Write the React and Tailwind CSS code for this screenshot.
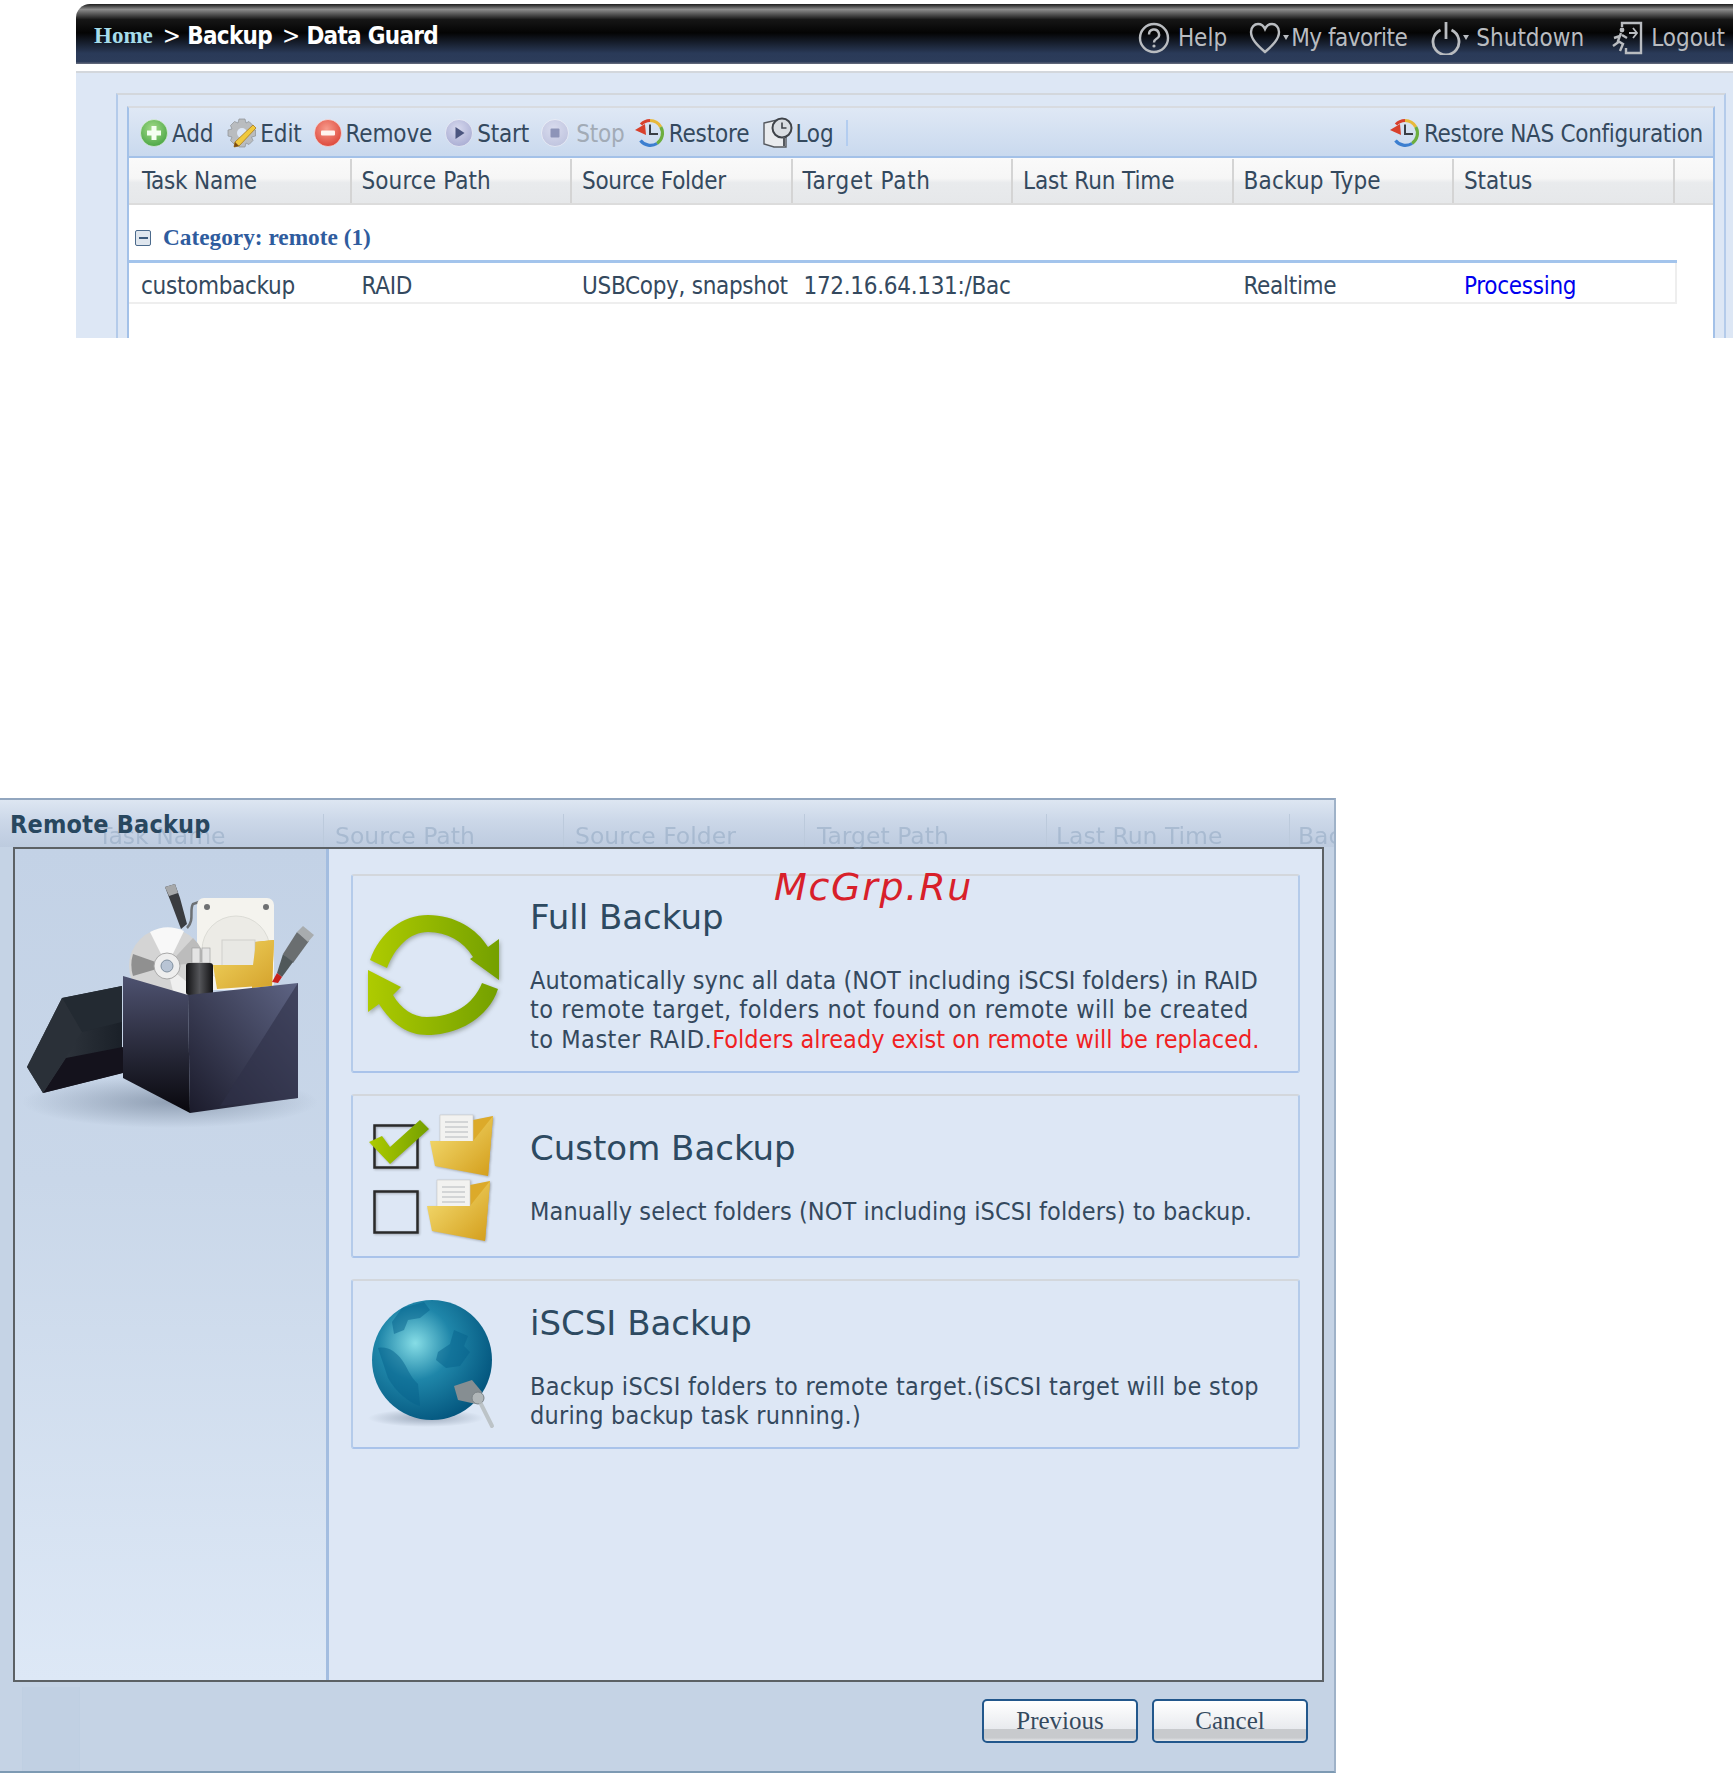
const COLS = [
  { label: 'Task Name', track: 'tracking-[-0.2px]' },
  { label: 'Source Path', track: 'tracking-[0.1px]' },
  { label: 'Source Folder', track: 'tracking-[-0.3px]' },
  { label: 'Target Path', track: 'tracking-[0.7px]' },
  { label: 'Last Run Time', track: 'tracking-[-0.1px]' },
  { label: 'Backup Type', track: 'tracking-[0.2px]' },
  { label: 'Status', track: 'tracking-[-0.1px]' },
]

function Round({ id, from, to, children }) {
  return (
    <svg width="28" height="28" viewBox="0 0 28 28" className="shrink-0">
      <defs>
        <radialGradient id={id} cx="0.45" cy="0.35" r="0.75">
          <stop offset="0" stopColor={from} />
          <stop offset="1" stopColor={to} />
        </radialGradient>
      </defs>
      <circle cx="14" cy="14" r="13.500" fill={`url(#${id})`} stroke="#ffffff" strokeOpacity="0.5" />
      {children}
    </svg>
  )
}

function AddIcon() {
  return (
    <Round id="gAdd" from="#a5dc8a" to="#3f9f3c">
      <path d="M11.500 7h5v4.500H21v5h-4.500V21h-5v-4.500H7v-5h4.500z" fill="#f4fff0" />
    </Round>
  )
}

function RemoveIcon() {
  return (
    <Round id="gRem" from="#f79b8c" to="#d93c30">
      <rect x="7" y="11.500" width="14" height="5" rx="1" fill="#fff4f0" />
    </Round>
  )
}

function StartIcon() {
  return (
    <Round id="gStart" from="#d7d9ee" to="#a4a8d0">
      <path d="M10.500 8l9 6-9 6z" fill="#4b557f" />
    </Round>
  )
}

function StopIcon() {
  return (
    <Round id="gStop" from="#d9dcee" to="#bcc1dd">
      <rect x="9.500" y="9.500" width="9" height="9" rx="1" fill="#8d94b8" />
    </Round>
  )
}

function EditIcon() {
  return (
    <svg width="32" height="32" viewBox="0 0 32 32" className="shrink-0">
      <g fill="#b9bcbf" stroke="#8d9093" strokeWidth="0.7">
        <path d="M13 2h6l1 4 3-1.500 4 4L25.500 12l4 1v6l-4 1 1.500 3.500-4 4L20 26l-1 4h-6l-1-4-3.500 1.500-4-4L6 20l-4-1v-6l4-1-1.500-3.500 4-4L12 6z" />
      </g>
      <circle cx="16" cy="16" r="5" fill="#dde7f5" />
      <path d="M27 8l3 3-17 18-5 1 1-5z" fill="#f0c93e" stroke="#a87a1a" strokeWidth="0.8" />
      <path d="M9 25l-1 5 5-1z" fill="#7a4a14" />
    </svg>
  )
}

function RestoreIcon() {
  return (
    <svg width="30" height="30" viewBox="0 0 30 30" className="shrink-0">
      <path d="M15 2.500a12.500 12.500 0 0 1 10.800 6.500" fill="none" stroke="#e8b93a" strokeWidth="3.200" />
      <path d="M25.800 9A12.500 12.500 0 0 1 22 25.500" fill="none" stroke="#6cae3f" strokeWidth="3.200" />
      <path d="M22 25.500A12.500 12.500 0 0 1 5.500 22.500" fill="none" stroke="#3c7fd0" strokeWidth="3.200" />
      <path d="M15 2.500A12.500 12.500 0 0 0 6 6.500" fill="none" stroke="#d8402c" strokeWidth="3.200" />
      <path d="M0 12l10-6 1 11z" fill="#d8402c" />
      <path d="M15 6.500v9.500h8" fill="none" stroke="#3a3f46" strokeWidth="2" />
    </svg>
  )
}

function LogIcon() {
  return (
    <svg width="30" height="32" viewBox="0 0 30 32" className="shrink-0">
      <path d="M1 6l13-3 9 4v23l-12 0-10-3z" fill="#e9ebee" stroke="#55595f" strokeWidth="1.400" />
      <circle cx="19" cy="11" r="9.500" fill="#d9dde2" stroke="#3f4349" strokeWidth="2" />
      <path d="M19 5.500v5.500h4.500" fill="none" stroke="#3f4349" strokeWidth="1.600" />
      <path d="M21 20v9" stroke="#55595f" strokeWidth="2" />
    </svg>
  )
}

function ToolItem({ icon, label, className = '', muted = false }) {
  return (
    <div className={`flex items-center gap-[4px] ${className}`}>
      {icon}
      <span className={`pt-[2px] ${muted ? 'text-[#a2abb6]' : 'text-[#34495e]'}`}>{label}</span>
    </div>
  )
}

function HeadIcons({ kind }) {
  const s = { fill: 'none', stroke: '#b9bcc0', strokeWidth: 2.400 }
  if (kind === 'help') {
    return (
      <svg width="32" height="32" viewBox="0 0 32 32" className="shrink-0">
        <circle cx="16" cy="16" r="14" {...s} />
        <path d="M11 12.500a5 5 0 1 1 7.500 4.300c-1.700 1-2.500 1.700-2.500 3.700" {...s} />
        <circle cx="16" cy="24" r="1.600" fill="#b9bcc0" />
      </svg>
    )
  }
  if (kind === 'heart') {
    return (
      <svg width="32" height="32" viewBox="0 0 32 32" className="shrink-0">
        <path d="M16 30C8 23 2 17 2 10c0-5 3.500-8 7-8 3 0 5.500 1.500 7 5 1.500-3.500 4-5 7-5 3.500 0 7 3 7 8 0 7-6 13-14 20z" {...s} />
      </svg>
    )
  }
  if (kind === 'power') {
    return (
      <svg width="30" height="34" viewBox="0 0 30 34" className="shrink-0">
        <path d="M9.500 9a13 13 0 1 0 11 0" {...s} strokeWidth="2.800" />
        <path d="M15 1v17" {...s} strokeWidth="2.800" />
      </svg>
    )
  }
  return (
    <svg width="32" height="34" viewBox="0 0 32 34" className="shrink-0">
      <path d="M11 6V2h19v30H15v-5" {...s} />
      <circle cx="11" cy="9" r="2.400" fill="#b9bcc0" />
      <path d="M10 12l-3 8 5 3-3 7M9 15l-6 2M9 20l-7 5M11 14l5 3" {...s} />
      <path d="M18 12h8M22 7l4 5-4 5" {...s} strokeWidth="1.800" />
    </svg>
  )
}

function Caret() {
  return <span className="mx-[2px] h-0 w-0 border-x-[3px] border-t-[5px] border-x-transparent border-t-[#b9bcc0]" />
}

function Header() {
  return (
    <div className="flex h-[60px] items-center justify-between rounded-tl-[14px] bg-[linear-gradient(180deg,#1c1c1c_0%,#8b8b8b_9%,#161616_26%,#040404_48%,#2a3a58_82%,#2c3c5a_96%,#6a7080_100%)] pl-[18px] pr-[8px] pt-[2px]">
      <div className="flex items-center pt-[2px] text-[24px] font-bold tracking-[-0.7px] text-white [font-family:'DejaVu_Sans_Condensed','DejaVu_Sans',sans-serif]">
        <span className="text-[23px] tracking-normal text-[#a6dcea] [font-family:'Liberation_Serif',serif]">Home</span>
        <span className="ml-[10px] font-normal">&gt;</span>
        <span className="ml-[7px]">Backup</span>
        <span className="ml-[10px] font-normal">&gt;</span>
        <span className="ml-[7px]">Data Guard</span>
      </div>
      <div className="flex items-center pt-[5px] text-[24px] text-[#b9bcc0] [font-family:'DejaVu_Sans_Condensed','DejaVu_Sans',sans-serif]">
        <HeadIcons kind="help" />
        <span className="ml-[8px]">Help</span>
        <span className="ml-[22px]"><HeadIcons kind="heart" /></span>
        <Caret />
        <span className="tracking-[-0.5px]">My favorite</span>
        <span className="ml-[24px]"><HeadIcons kind="power" /></span>
        <Caret />
        <span className="ml-[5px]">Shutdown</span>
        <span className="ml-[27px]"><HeadIcons kind="logout" /></span>
        <span className="ml-[8px]">Logout</span>
      </div>
    </div>
  )
}

function Toolbar() {
  return (
    <div className="flex h-[50px] items-center justify-between border-b-[2px] border-[#a3c1e8] bg-[linear-gradient(180deg,#dfe8f5,#c9d9ee)] pl-[11px] pr-[10px] pt-[1px]">
      <div className="flex items-center tracking-[-0.15px]">
        <ToolItem icon={<AddIcon />} label="Add" />
        <ToolItem icon={<EditIcon />} label="Edit" className="ml-[13px] !gap-[2px]" />
        <ToolItem icon={<RemoveIcon />} label="Remove" className="ml-[12px]" />
        <ToolItem icon={<StartIcon />} label="Start" className="ml-[13px]" />
        <ToolItem icon={<StopIcon />} label="Stop" className="ml-[12px] !gap-[7px]" muted />
        <ToolItem icon={<RestoreIcon />} label="Restore" className="ml-[10px]" />
        <ToolItem icon={<LogIcon />} label="Log" className="ml-[14px] !gap-[2px]" />
        <div className="ml-[13px] h-[26px] w-[2px] bg-[#b3cdf0]" />
      </div>
      <ToolItem icon={<RestoreIcon />} label="Restore NAS Configuration" />
    </div>
  )
}

function DataGrid() {
  return (
    <div className="text-[24px] tracking-[-0.3px] [font-family:'DejaVu_Sans_Condensed','DejaVu_Sans',sans-serif]">
      <Toolbar />
      <div className="grid h-[47px] grid-cols-[222.5px_repeat(6,220.5px)_1fr] border-b-[2px] border-[#dcdcdc] bg-[linear-gradient(180deg,#fafafa_0%,#f6f6f6_45%,#e9ebed_55%,#e6e8ea_100%)] pt-[1px] text-[#34495e]">
        {COLS.map((c, i) => (
          <div key={c.label} className={`flex items-center border-r-[2px] border-[#d4d4d4] ${c.track} ${i === 0 ? 'pl-[13px]' : 'pl-[10px]'}`}>{c.label}</div>
        ))}
        <div />
      </div>
      <div className="bg-white">
        <div className="h-[58px] w-[1548px] border-b-[3px] border-[#a3c4ec]">
          <div className="flex h-full items-center pl-[6px] pt-[10px]">
            <span className="flex h-[16px] w-[16px] items-center justify-center rounded-[2px] border border-[#4b6a8c] bg-[#dfe6ee]">
              <span className="h-[2px] w-[9px] bg-[#3c5a7c]" />
            </span>
            <span className="ml-[12px] text-[23.300px] font-bold tracking-normal text-[#2f5c9e] [font-family:'Liberation_Serif',serif]">Category: remote (1)</span>
          </div>
        </div>
        <div className="grid h-[41px] w-[1548px] grid-cols-[222.5px_repeat(6,220.5px)] whitespace-nowrap border-b-[2px] border-r-[2px] border-[#eeeeee] pt-[5px] text-[#34495e]">
          <div className="flex items-center pl-[12px]">custombackup</div>
          <div className="flex items-center pl-[10px]">RAID</div>
          <div className="flex items-center pl-[10px]">USBCopy, snapshot</div>
          <div className="flex items-center overflow-hidden pl-[11px]">172.16.64.131:/Bac</div>
          <div />
          <div className="flex items-center pl-[10px]">Realtime</div>
          <div className="flex items-center pl-[10px] text-[#0000ee]">Processing</div>
        </div>
      </div>
    </div>
  )
}

function BoxArt() {
  return (
    <svg width="300" height="260" viewBox="0 0 300 260" className="ml-[5px] mt-[21px]">
      <defs>
        <linearGradient id="boxL" x1="0" y1="0" x2="0" y2="1">
          <stop offset="0" stopColor="#4e5270" />
          <stop offset="1" stopColor="#08070c" />
        </linearGradient>
        <linearGradient id="boxR" x1="1" y1="0" x2="0" y2="1">
          <stop offset="0" stopColor="#5e6484" />
          <stop offset="1" stopColor="#1a1a2a" />
        </linearGradient>
        <linearGradient id="boxF" x1="0" y1="0" x2="1" y2="1">
          <stop offset="0" stopColor="#f2d560" />
          <stop offset="1" stopColor="#d4a22c" />
        </linearGradient>
        <linearGradient id="stick" x1="0" y1="0" x2="1" y2="0">
          <stop offset="0" stopColor="#111113" />
          <stop offset="0.5" stopColor="#55565a" />
          <stop offset="1" stopColor="#111113" />
        </linearGradient>
        <radialGradient id="boxS">
          <stop offset="0" stopColor="#5a6a80" stopOpacity="0.5" />
          <stop offset="1" stopColor="#5a6a80" stopOpacity="0" />
        </radialGradient>
        <linearGradient id="lid" x1="0" y1="0" x2="1" y2="0">
          <stop offset="0" stopColor="#3a4048" />
          <stop offset="1" stopColor="#1a2028" />
        </linearGradient>
      </defs>
      <ellipse cx="150" cy="232" rx="148" ry="26" fill="url(#boxS)" />
      <path d="M7 197L42 128l60-12v87L23 223z" fill="url(#lid)" />
      <path d="M42 128l20 34 40-10v-36z" fill="#232a32" />
      <path d="M23 223L46 188l57-11v26z" fill="#14121c" />
      <path d="M7 197L42 128l20 34-39 61z" fill="#2a3038" />
      <path d="M167 58c8-8 2-18 6-24l6-2" fill="none" stroke="#6c7074" strokeWidth="2.500" />
      <path d="M145 17l10-3 5 14 7 26-6 5-9-24z" fill="#3a3c40" />
      <path d="M145 17l10-3 3 9-9 3z" fill="#a6a8aa" />
      <rect x="177" y="28" width="77" height="92" rx="7" fill="#f4f3ee" />
      <circle cx="187" cy="37" r="3" fill="#6e7072" />
      <circle cx="246" cy="37" r="3" fill="#6e7072" />
      <circle cx="216" cy="80" r="34" fill="#ecebe6" stroke="#dcdcd6" />
      <circle cx="147" cy="96" r="38" fill="#d4d4d4" />
      <path d="M147 96L130 62a38 38 0 0 1 34-1z" fill="#f8f8f8" />
      <path d="M147 96l-34 10a38 38 0 0 1 0-22z" fill="#909090" />
      <path d="M147 96l30 24-22 10z" fill="#efefef" />
      <path d="M147 96l38-4a38 38 0 0 0-12-24z" fill="#bcbcbc" />
      <circle cx="147" cy="96" r="13" fill="#eeeeee" stroke="#a8a8a8" />
      <circle cx="147" cy="96" r="6" fill="#b8c4d4" stroke="#8090a0" />
      <path d="M233 72l21-2-2 46-20 2z" fill="#dfae2e" />
      <rect x="202" y="70" width="33" height="27" fill="#e8e8e4" stroke="#d0d0cc" />
      <path d="M193 95h40l3-23 18-2-2 45-55 4z" fill="url(#boxF)" />
      <rect x="172" y="78" width="8" height="15" fill="#e4e4e4" stroke="#9a9a9a" strokeWidth="0.6" />
      <rect x="182" y="78" width="8" height="15" fill="#e4e4e4" stroke="#9a9a9a" strokeWidth="0.6" />
      <rect x="166" y="93" width="27" height="32" rx="3" fill="url(#stick)" />
      <path d="M263 84l14-22 12 9-16 22z" fill="#6a6e70" />
      <path d="M277 62l6-6 11 9-6 7z" fill="#a8acae" />
      <path d="M263 84l10 8-11 15-5-4z" fill="#50585a" />
      <path d="M257 103l5 4-4 6-6-1z" fill="#c8201c" />
      <path d="M103 106l65 19 2 118-67-35z" fill="url(#boxL)" />
      <path d="M168 125l110-12v115l-108 15z" fill="url(#boxR)" />
      <path d="M278 113L200 236l78-8z" fill="#2e3048" fillOpacity="0.6" />
    </svg>
  )
}

function SyncIcon() {
  return (
    <svg width="160" height="160" viewBox="0 0 160 160" className="drop-shadow-[1px_2px_2px_rgba(60,70,50,0.4)]">
      <defs>
        <linearGradient id="syn" x1="0" y1="0" x2="1" y2="0">
          <stop offset="0" stopColor="#aecb00" />
          <stop offset="1" stopColor="#74a000" />
        </linearGradient>
      </defs>
      <path d="M15 63C25 35 48 18 73 18c27 0 49 14 60 32l11-8v41l-29-21 3-2C108 44 92 35 73 35 55 35 40 50 32 71z" fill="url(#syn)" />
      <path d="M13 73l33 17-8 8c8 14 20 22 34 22 26 0 46-12 55-34l16 6c-9 28-39 46-71 46-20 0-36-12-48-31l-11 8z" fill="url(#syn)" />
    </svg>
  )
}

function FolderDoc({ dx, dy, id }) {
  return (
    <g transform={`translate(${dx} ${dy})`}>
      <defs>
        <linearGradient id={id} x1="0" y1="0" x2="1" y2="1">
          <stop offset="0" stopColor="#f7e27a" />
          <stop offset="1" stopColor="#d39d1a" />
        </linearGradient>
      </defs>
      <path d="M108 16l20-4-5 60-15-8z" fill="#dcaa2a" />
      <rect x="75" y="11" width="33" height="27" fill="#f2f2f0" stroke="#c8c8c8" strokeWidth="0.6" />
      <path d="M80 18h23M80 23h23M80 28h23M80 33h23" stroke="#b4b8bc" strokeWidth="1" />
      <path d="M65 37h43l20-25-5 60-53-10z" fill={`url(#${id})`} />
    </g>
  )
}

function CustomIcon() {
  return (
    <svg width="135" height="145" viewBox="0 0 135 145" className="drop-shadow-[1px_1px_1px_rgba(60,60,60,0.35)]">
      <defs>
        <linearGradient id="chk" x1="0" y1="0" x2="1" y2="0">
          <stop offset="0" stopColor="#aecb00" />
          <stop offset="1" stopColor="#74a000" />
        </linearGradient>
      </defs>
      <rect x="9.500" y="21.500" width="43" height="42" fill="none" stroke="#2a2a2a" strokeWidth="2.500" />
      <rect x="9.500" y="87.500" width="43" height="41" fill="none" stroke="#2a2a2a" strokeWidth="2.500" />
      <path d="M4 38l13-6 8 11L55 16l9 9-39 35z" fill="url(#chk)" />
      <FolderDoc dx={0} dy={0} id="fdA" />
      <FolderDoc dx={-3} dy={65} id="fdB" />
    </svg>
  )
}

function GlobeIcon() {
  return (
    <svg width="135" height="155" viewBox="0 0 135 155">
      <defs>
        <radialGradient id="glb" cx="0.36" cy="0.36" r="0.68">
          <stop offset="0" stopColor="#86dde6" />
          <stop offset="0.45" stopColor="#1f86a9" />
          <stop offset="1" stopColor="#04577f" />
        </radialGradient>
        <radialGradient id="glbS">
          <stop offset="0" stopColor="#5a6a80" stopOpacity="0.5" />
          <stop offset="1" stopColor="#5a6a80" stopOpacity="0" />
        </radialGradient>
      </defs>
      <ellipse cx="60" cy="128" rx="58" ry="9" fill="url(#glbS)" />
      <circle cx="66" cy="70" r="60" fill="url(#glb)" />
      <path d="M36 18l22-6 6 8-10 8-12 2-4 10-10 4-2-12zM12 58c10-2 18 4 24 12 6 8 6 14 16 24l2 22c-12-4-24-14-32-28zM72 62l12-8 4-14 14 6-4 10 6 6-10 14-14 2-10-8z" fill="#06628c" fillOpacity="0.5" />
      <path d="M88 96l18-6 10 12-6 12-18-4z" fill="#868e92" />
      <circle cx="112" cy="108" r="6" fill="#b0b6b8" stroke="#7c8488" />
      <path d="M115 114l11 22" stroke="#b4babc" strokeWidth="4" strokeLinecap="round" strokeOpacity="0.8" />
    </svg>
  )
}

function OptionCard({ icon, iconClass, title, top, children }) {
  return (
    <div className={`flex rounded-[3px] border-[2px] border-x-[#b4cbea] border-b-[#a9c3ea] border-t-[#d3d7dc] ${top}`}>
      <div className={`w-[177px] shrink-0 ${iconClass}`}>{icon}</div>
      <div>
        <div className="h-[40px] text-[34px] leading-[40px] text-[#2d4a61] [font-family:'DejaVu_Sans',sans-serif]">{title}</div>
        <div className="mt-[29px] whitespace-nowrap text-[25px] leading-[29.400px] text-[#34495e]">{children}</div>
      </div>
    </div>
  )
}

function Dialog() {
  const ghost = [
    ['Task Name', 98], ['Source Path', 335], ['Source Folder', 575], ['Target Path', 817], ['Last Run Time', 1056], ['Bac', 1298],
  ]
  const ghostLines = [323, 563, 804, 1046, 1289]
  return (
    <div className="relative mt-[460px] h-[975px] w-[1336px] overflow-hidden border-b-[2px] border-r-[2px] border-t-[2px] border-b-[#7d9ab3] border-r-[#9fb2c8] border-t-[#92a6bf] bg-[#c5d3e5] [font-family:'DejaVu_Sans_Condensed','DejaVu_Sans',sans-serif]">
      <div className="relative h-[47px] bg-[linear-gradient(180deg,#dde6f2_0%,#cbd7e8_45%,#bdcbdf_100%)]">
        {ghost.map(([t, x]) => (
          <span key={t} className="absolute top-[19px] whitespace-nowrap text-[23.500px] text-[#8ea5bf] opacity-50 [font-family:'DejaVu_Sans',sans-serif]" style={{ left: x }}>{t}</span>
        ))}
        {ghostLines.map((x) => (
          <span key={x} className="absolute bottom-0 top-[14px] w-px bg-[#bccadc]" style={{ left: x }} />
        ))}
        <span className="absolute left-[10px] top-[6px] text-[25px] font-bold tracking-[0.2px] text-[#28475f]">Remote Backup</span>
      </div>
      <div className="ml-[13px] flex h-[835px] w-[1311px] border-[2px] border-[#5c6165] bg-[#dde7f5]">
        <div className="w-[314px] shrink-0 border-r-[3px] border-[#a3bde0] bg-[linear-gradient(180deg,#c3d2e6_0%,#c9d7e9_40%,#dde8f6_100%)]">
          <BoxArt />
        </div>
        <div className="flex-1 pl-[22px] pr-[22px] pt-[25px]">
          <OptionCard icon={<SyncIcon />} iconClass="pl-[2px]" title="Full Backup" top="h-[199px] pt-[21px]">
            <span className="tracking-[0.05px]">Automatically sync all data (NOT including iSCSI folders) in RAID</span><br />
            <span className="tracking-[0.5px]">to remote target, folders not found on remote will be created</span><br />
            <span className="tracking-[0.5px]">to Master RAID.</span><span className="text-[#f01f23]">Folders already exist on remote will be replaced.</span>
          </OptionCard>
          <OptionCard icon={<CustomIcon />} iconClass="pl-[12px] -mt-[24px]" title="Custom Backup" top="mt-[21px] h-[164px] pt-[32px]">
            <span className="tracking-[0.1px]">Manually select folders (NOT including iSCSI folders) to backup.</span>
          </OptionCard>
          <OptionCard icon={<GlobeIcon />} iconClass="pl-[13px] -mt-[13px]" title="iSCSI Backup" top="mt-[21px] h-[170px] pt-[22px]">
            <span className="tracking-[0.33px]">Backup iSCSI folders to remote target.(iSCSI target will be stop</span><br />
            <span className="tracking-[0.2px]">during backup task running.)</span>
          </OptionCard>
        </div>
      </div>
      <div className="flex justify-end gap-[14px] pr-[26px] pt-[17px]">
        {['Previous', 'Cancel'].map((b) => (
          <button key={b} className="h-[44px] w-[156px] rounded-[5px] border-[2px] border-[#22578c] bg-[linear-gradient(180deg,#ffffff_0%,#e8eaee_70%,#c8cacd_71%,#c8cacd_92%,#e6e8ea_100%)] text-[25px] text-[#34495e] [font-family:'Liberation_Serif',serif]">{b}</button>
        ))}
      </div>
      <span className="absolute left-[22px] top-[887px] h-[86px] w-[58px] border-x border-[#bccde1] bg-[#bfcfe3] opacity-60" />
    </div>
  )
}

export default function App() {
  return (
    <div className="relative h-[1773px] w-[1733px] overflow-hidden bg-white">
      <div className="pl-[76px] pt-[4px]">
        <Header />
        <div className="mt-[7px] h-[267px] overflow-hidden border-t-[2px] border-[#d3d7dc] bg-[#dde7f5] pl-[40px] pt-[20px]">
          <div className="h-[300px] w-[1610px] border-l-[2px] border-r-[2px] border-t-[2px] border-l-[#b4cbea] border-r-[#b4cbea] border-t-[#d3d7dc] pl-[9px] pr-[10px] pt-[11px]">
            <div className="h-[300px] w-[1588px] border-x-[2px] border-t-[2px] border-x-[#a3c1e8] border-t-[#d8dbe0] bg-white">
              <DataGrid />
            </div>
          </div>
        </div>
      </div>
      <Dialog />
      <div className="absolute left-[774px] top-[859px] text-[38px] italic tracking-[1.700px] text-[#d8202a] [font-family:'DejaVu_Sans',sans-serif]">McGrp.Ru</div>
    </div>
  )
}
